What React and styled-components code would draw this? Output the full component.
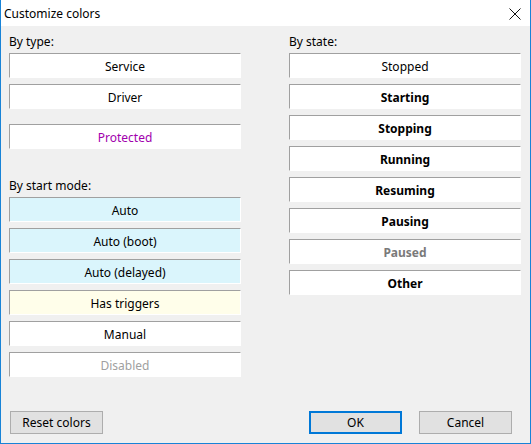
import React from 'react'
import styled, { createGlobalStyle } from 'styled-components'

const GlobalStyle = createGlobalStyle`
  html, body {
    margin: 0;
    padding: 0;
    background: #f0f0f0;
  }
  * {
    box-sizing: border-box;
  }
`

const Window = styled.div`
  border: 1px solid #1883d7;
  border-top: none;
  display: flex;
  flex-direction: column;
  font-family: "Segoe UI", "Noto Sans", "Liberation Sans", sans-serif;
  font-size: 12px;
  height: 444px;
  width: 531px;
  background: #f0f0f0;
  color: #000;
`
const TitleBar = styled.div`
  align-items: center;
  background: #fff;
  display: flex;
  height: 26px;
  justify-content: space-between;
  padding: 0 9px 0 3px;
`
const Title = styled.span`
  font-size: 12px;
`
const CloseIcon = styled.svg`
  display: block;
  margin-top: 1px;
`
const Body = styled.div`
  display: grid;
  flex: 1;
  gap: 48px;
  grid-template-columns: 232px 232px;
  padding: 8px 8px 0 8px;
`
const Column = styled.div`
  display: flex;
  flex-direction: column;
`
const Label = styled.div`
  height: 15px;
  line-height: 15px;
  margin-bottom: 4px;
  margin-top: ${props => props.spaced ? '23px' : '0'};
`
const Swatch = styled.div`
  align-items: center;
  background: ${props => props.bg || '#fff'};
  border-bottom: 1px solid #fff;
  border-left: 1px solid #a0a0a0;
  border-right: 1px solid #fff;
  border-top: 1px solid #a0a0a0;
  color: ${props => props.color || '#000'};
  display: flex;
  font-weight: ${props => props.bold ? 'bold' : 'normal'};
  height: 25px;
  justify-content: center;
  margin-bottom: 6px;
  margin-top: ${props => props.gap || 0}px;
  padding-top: 1px;
`
const Footer = styled.div`
  align-items: center;
  display: flex;
  padding: 0 18px 9px 9px;
`
const Button = styled.button`
  background: #e1e1e1;
  border: ${props => props.primary ? '2px solid #0078d7' : '1px solid #adadad'};
  color: #000;
  font-family: inherit;
  font-size: 12px;
  height: 23px;
  margin-left: ${props => props.push ? 'auto' : props.spaced ? '17px' : '0'};
  padding: 0;
  width: 93px;
`

const startModes = [
  { name: 'Auto', bg: '#daf5fc' },
  { name: 'Auto (boot)', bg: '#daf5fc' },
  { name: 'Auto (delayed)', bg: '#daf5fc' },
  { name: 'Has triggers', bg: '#fffeea' },
  { name: 'Manual' },
  { name: 'Disabled', color: '#a0a0a0' },
]

const states = [
  { name: 'Stopped' },
  { name: 'Starting', bold: true },
  { name: 'Stopping', bold: true },
  { name: 'Running', bold: true },
  { name: 'Resuming', bold: true },
  { name: 'Pausing', bold: true },
  { name: 'Paused', bold: true, color: '#7a7a7a' },
  { name: 'Other', bold: true },
]

const App = () => {
  return (
    <Window>
      <GlobalStyle />
      <TitleBar>
        <Title>Customize colors</Title>
        <CloseIcon width="12" height="12" viewBox="0 0 12 12">
          <path d="M0.5 0.5 L11.5 11.5 M11.5 0.5 L0.5 11.5" stroke="#111" strokeWidth="1" fill="none" />
        </CloseIcon>
      </TitleBar>
      <Body>
        <Column>
          <Label>By type:</Label>
          <Swatch>Service</Swatch>
          <Swatch>Driver</Swatch>
          <Swatch gap={9} color="#a100ad">Protected</Swatch>
          <Label spaced>By start mode:</Label>
          {startModes.map(m => (
            <Swatch key={m.name} bg={m.bg} color={m.color}>{m.name}</Swatch>
          ))}
        </Column>
        <Column>
          <Label>By state:</Label>
          {states.map(s => (
            <Swatch key={s.name} bold={s.bold} color={s.color}>{s.name}</Swatch>
          ))}
        </Column>
      </Body>
      <Footer>
        <Button>Reset colors</Button>
        <Button primary push>OK</Button>
        <Button spaced>Cancel</Button>
      </Footer>
    </Window>
  )
}

export default App
